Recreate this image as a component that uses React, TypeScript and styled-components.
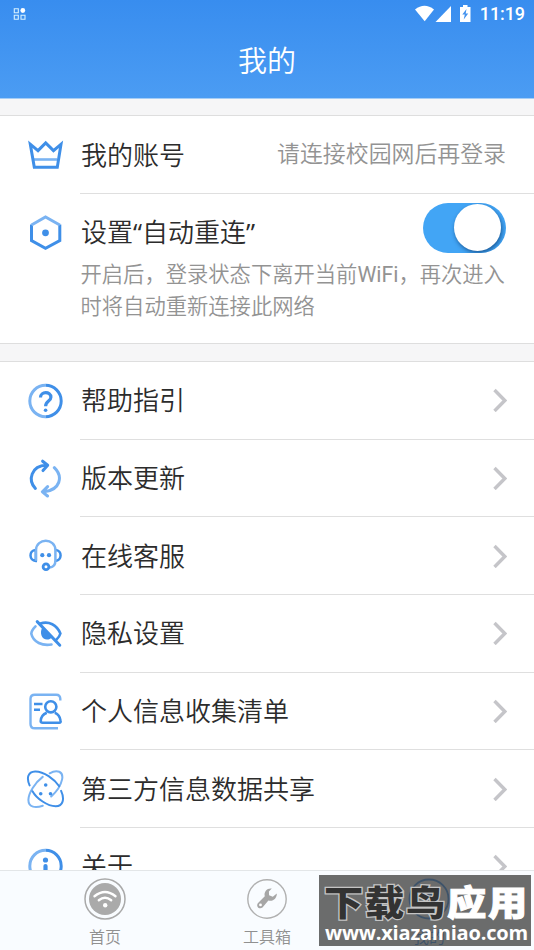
import React from "react";
import styled, { createGlobalStyle } from "styled-components";

const DEEP = "#3f8fe8";
const PALE = "#7ab3f2";

const GlobalStyle = createGlobalStyle`
  * { box-sizing: border-box; }
  html, body { margin: 0; padding: 0; overflow: hidden; }
  body { font-family: Roboto, "Noto Sans CJK SC", sans-serif; font-weight: 400; }
`;

const Screen = styled.div`
  width: 534px;
  height: 950px;
  display: flex;
  flex-direction: column;
  background: #f6f6f7;
  overflow: hidden;
  position: relative;
`;

const Header = styled.header`
  flex: none;
  height: 99px;
  background: linear-gradient(#388def, #4b9cf3);
  border-bottom: 1px solid #a5cdf6;
  color: #fff;
`;

const StatusBar = styled.div`
  height: 27px;
  display: flex;
  align-items: center;
  justify-content: space-between;
  padding: 0 9px 0 13px;
`;

const StatusIcons = styled.div`
  display: flex;
  align-items: center;
`;

const Clock = styled.span`
  width: 46px;
  font: 500 18px/27px Roboto, sans-serif;
  letter-spacing: -0.1px;
  margin-left: 6px;
  text-align: right;
`;

const Title = styled.h1`
  margin: 0;
  height: 66px;
  padding-top: 3px;
  font-size: 29px;
  line-height: 65px;
  font-weight: 350;
  text-align: center;
`;

const Content = styled.main`
  flex: 1;
  min-height: 0;
  overflow: hidden;
`;

const Group = styled.section<{ $last?: boolean }>`
  margin-top: ${(p) => (p.$last ? 17 : 16)}px;
  background: #fff;
  border-top: 1px solid #dedede;
  border-bottom: 1px solid #dedede;
`;

const Row = styled.div<{ $h: number }>`
  height: ${(p) => p.$h}px;
  display: flex;
  padding-left: 25px;
`;

const IconCell = styled.div`
  width: 41px;
  height: 77px;
  display: flex;
  align-items: center;
  flex: none;
`;

const RowBody = styled.div<{ $line?: boolean }>`
  flex: 1;
  margin-left: 14px;
  padding-right: 27px;
  display: flex;
  align-items: center;
  justify-content: space-between;
  border-bottom: ${(p) => (p.$line ? "1px solid #dfdfdf" : "none")};
`;

const Label = styled.span`
  font-family: "Open Sans", "Noto Sans CJK SC", sans-serif;
  font-size: 26px;
  line-height: 38px;
  font-weight: 350;
  color: #2c2c2c;
  padding-left: 1px;
`;

const Note = styled.span`
  font-size: 22.9px;
  line-height: 32px;
  font-weight: 350;
  color: #939393;
  margin: 1px 1px 0 0;
`;

const SettingBody = styled.div`
  flex: 1;
  margin-left: 14px;
  padding-right: 28px;
`;

const SettingHead = styled.div`
  display: flex;
  align-items: flex-start;
  justify-content: space-between;
  height: 64px;
  padding-top: 9px;
`;

const SettingLabel = styled(Label)`
  margin-top: 10px;
`;

const Latin = styled.span`
  font-weight: 400;
`;

const Description = styled.p`
  margin: 1px -10px 0 0.5px;
  font-size: 21.3px;
  line-height: 32px;
  font-weight: 350;
  color: #939393;
  white-space: nowrap;
`;

const Switch = styled.button`
  width: 83px;
  height: 50px;
  border: 0;
  border-radius: 26px;
  background: #42a5f5;
  padding: 1px 5px 1px 0;
  display: flex;
  justify-content: flex-end;
  overflow: hidden;
`;

const Knob = styled.span`
  width: 47px;
  height: 47px;
  border-radius: 50%;
  background: #fff;
  box-shadow: 1px 2px 4px rgba(0, 40, 90, 0.6);
`;

const TabBar = styled.nav`
  flex: none;
  height: 80px;
  display: grid;
  grid-template-columns: repeat(3, 162px);
  padding-left: 24px;
  background: #f9fcff;
  border-top: 1px solid #e3e6e8;
`;

const Tab = styled.div<{ $active?: boolean }>`
  display: flex;
  flex-direction: column;
  align-items: center;
  padding-top: 7px;
  font-size: 16px;
  line-height: 24px;
  font-weight: 350;
  color: ${(p) => (p.$active ? "#2f8cf0" : "#909090")};
  svg { margin-bottom: 6px; }
`;

const Watermark = styled.div`
  position: absolute;
  left: 319px;
  top: 875px;
  width: 212px;
  height: 71px;
  background: rgba(66, 66, 66, 0.78);
  color: #fff;
  overflow: hidden;
`;

const BrandLine = styled.div`
  display: flex;
  height: 48px;
  padding-left: 4px;
  font-size: 35px;
  line-height: 60px;
  font-weight: 900;
`;

const BrandChar = styled.span<{ $dark?: boolean }>`
  width: 41px;
  text-align: center;
  transform: scaleX(1.12);
  color: ${(p) => (p.$dark ? "#333" : "#fff")};
  -webkit-text-stroke: ${(p) => (p.$dark ? "2.5px #c4c4c4" : "1px #fff")};
  paint-order: stroke fill;
`;

const BrandUrl = styled.div`
  font: 700 20px/20px "Open Sans", sans-serif;
  letter-spacing: -0.2px;
  padding-left: 6px;
  white-space: nowrap;
`;

/* Row icons share a 40-unit canvas with its centre at 20,20. */
const RowIcon = ({ children }: { children: React.ReactNode }) => (
  <svg width="40" height="40" viewBox="0 0 40 40" fill="none" stroke={DEEP} strokeWidth="2.6">
    {children}
  </svg>
);

const Crown = () => (
  <RowIcon>
    <path d="M9 24.5H32" stroke={PALE} />
    <path d="M5.3 9.2 L9.3 32.2 H32.3 L36 9.2 L28.5 15.6 L20.7 7.9 L13 15.6 Z" strokeWidth="3" />
  </RowIcon>
);

const Hexagon = () => (
  <RowIcon>
    <path d="M6.5 11.5V27.5L20.5 35.3L34.8 27.5V11.5" strokeWidth="3" />
    <path d="M6.5 12L20.5 4L34.8 12" stroke={PALE} strokeWidth="3" />
    <circle cx="20.5" cy="19.8" r="3.4" fill={DEEP} stroke="none" />
  </RowIcon>
);

const Ring = ({ children }: { children: React.ReactNode }) => (
  <RowIcon>
    <path d="M20.5 4.3A15.7 15.7 0 0 0 20.5 35.7" stroke={PALE} strokeWidth="3" />
    <path d="M20.5 4.3A15.7 15.7 0 0 1 20.5 35.7" strokeWidth="3" />
    {children}
  </RowIcon>
);

const Help = () => (
  <Ring>
    <path d="M15.5 16.5C15.5 10 25.9 10.2 25.9 16.2C25.9 20.3 20.6 19.8 20.6 25.3" strokeWidth="3.2" />
    <circle cx="20.6" cy="29.2" r="1.8" fill={DEEP} stroke="none" />
  </Ring>
);

const Info = () => (
  <Ring>
    <circle cx="20.5" cy="14" r="2.6" fill={DEEP} stroke="none" />
    <path d="M20.5 20V30" strokeWidth="4.2" strokeLinecap="round" />
  </Ring>
);

const Refresh = () => (
  <RowIcon>
    <g strokeLinecap="round" strokeLinejoin="round" strokeWidth="3">
      <path d="M10.4 30.5C2.6 22 6 8 21.5 7.1M17.6 3.2L22.7 7.2L18 12.6" />
      <path d="M29.3 9.7C38.4 18.5 35.4 32 19 33.8M22.6 28.6L17.4 33.8L22.5 38" stroke={PALE} />
    </g>
  </RowIcon>
);

const Support = () => (
  <RowIcon>
    <path d="M10.5 14.1C3.7 14.4 3.9 24.7 10.8 24.9V13.8M30.6 14.1C37.4 14.4 37.2 24.7 30.3 24.9" strokeWidth="2.5" />
    <path d="M11 24.8V14C11.4 1.8 30.2 1.8 30.4 14V24.5C30.4 29 28.5 31 25 31.5" stroke={PALE} strokeWidth="2.5" />
    <circle cx="17.3" cy="19.2" r="2.1" fill={DEEP} stroke="none" />
    <circle cx="24" cy="19.2" r="2.1" fill={DEEP} stroke="none" />
    <circle cx="21" cy="30.8" r="2.9" strokeWidth="2.8" />
  </RowIcon>
);

const Privacy = () => (
  <RowIcon>
    <g transform="translate(0 .7)">
      <path d="M10.5 12.7C8.2 15 6.4 18 6.3 20C8.3 28.6 17.5 32.5 26.5 30.8" stroke={PALE} strokeLinecap="round" />
      <path d="M15.4 9.8C24 7.1 31.8 11.2 35.4 19.8C34.7 22.4 33 24.6 31.3 26" strokeLinecap="round" />
      <path d="M17 14.5L26.7 23.5C25 26.6 18 27.1 16.5 21.8C15.6 19 16 16 17 14.5Z" fill={DEEP} stroke="none" />
      <path d="M12.2 7.9L34.8 31.5" strokeLinecap="round" strokeWidth="3" />
    </g>
  </RowIcon>
);

const Profile = () => (
  <RowIcon>
    <path d="M35.3 9.5V7.8Q35.3 3.7 31.3 3.7H9.8Q5.5 3.7 5.5 7.8V33Q5.5 37.3 9.8 37.3H33" stroke={PALE} strokeWidth="2.4" />
    <path d="M9 13H17.5M9 18.8H15" strokeWidth="2.5" />
    <circle cx="25.8" cy="15.8" r="5.6" strokeWidth="2.6" />
    <path d="M21.8 21.8C18.3 23.2 15.8 26.7 15.7 30.2Q15.8 31.7 17.6 31.7H34.3Q35.9 31.7 35.6 29.9C35.1 26.2 32.8 23 29.8 21.8" strokeWidth="2.6" />
  </RowIcon>
);

const Orbit = () => (
  <RowIcon>
    <g strokeWidth="2" strokeLinecap="round" transform="translate(0 -.8)">
      <path d="M24.7 5.1C32 .8 38.7 3.2 37.1 11.2C35.9 17 31.5 23.5 26.2 28.3M17.8 37.5C11 39.8 3.2 39.6 3.4 31.5C3.6 24.7 9.9 14.6 17.7 8.7" stroke={PALE} />
      <path d="M4.6 17.2C1.4 10.1 2.7 3.4 10.1 3.2C18.8 3 29.4 11 34.2 18M36.1 22.7C39.8 30.7 38.1 38.1 30.7 38.1C22.5 37.9 11.7 30.6 7.5 23" />
    </g>
    <g fill={DEEP} stroke="none">
      <circle cx="20.7" cy="16" r="1.8" />
      <circle cx="15.7" cy="24.8" r="1.8" />
      <circle cx="25.5" cy="24.8" r="1.8" />
    </g>
  </RowIcon>
);

const Chevron = () => (
  <svg width="14" height="24" viewBox="0 0 14 24" fill="none" stroke="#c5c5c9" strokeWidth="3.4">
    <path d="M1.5 2L11.8 12.5L1.5 23" />
  </svg>
);

const entries: [string, () => React.JSX.Element][] = [
  ["帮助指引", Help],
  ["版本更新", Refresh],
  ["在线客服", Support],
  ["隐私设置", Privacy],
  ["个人信息收集清单", Profile],
  ["第三方信息数据共享", Orbit],
  ["关于", Info],
];

export default function App() {
  return (
    <Screen lang="zh-CN">
      <GlobalStyle />
      <Header>
        <StatusBar>
          <svg width="14" height="14" viewBox="0 0 14 14" fill="none" stroke="#d6f1ff" strokeWidth="1.1">
            <path d="M1.3 1.8H5.3V5.8H1.3ZM1.3 8.2H5.3V12.2H1.3ZM8 8.2H12V12.2H8Z" />
            <circle cx="9.8" cy="3.5" r="2.4" fill="#fff" stroke="none" />
          </svg>
          <StatusIcons>
            <svg width="58" height="18" viewBox="0 0 58 18" fill="#fff">
              <path d="M0 4.5Q9.5-3 19 4.5L9.7 16.3Z" />
              <path d="M36 1V17H20.5Z" />
              <path d="M45 2H48V0H52.5V2H55.5V17H45Z" />
              <path d="M51.5 4L47.3 9.6H49.8L48.7 14.5L53.2 8.4H50.7Z" fill="#4292ef" />
            </svg>
            <Clock>11:19</Clock>
          </StatusIcons>
        </StatusBar>
        <Title>我的</Title>
      </Header>

      <Content>
        <Group>
          <Row $h={78}>
            <IconCell><Crown /></IconCell>
            <RowBody $line>
              <Label>我的账号</Label>
              <Note>请连接校园网后再登录</Note>
            </RowBody>
          </Row>
          <Row $h={149}>
            <IconCell><Hexagon /></IconCell>
            <SettingBody>
              <SettingHead>
                <SettingLabel>
                  设置<Latin>“</Latin>自动重连<Latin>”</Latin>
                </SettingLabel>
                <Switch aria-label="自动重连"><Knob /></Switch>
              </SettingHead>
              <Description>
                开启后，登录状态下离开当前<Latin>WiFi</Latin>，再次进入
                <br />
                时将自动重新连接此网络
              </Description>
            </SettingBody>
          </Row>
        </Group>

        <Group $last>
          {entries.map(([name, Icon]) => (
            <Row key={name} $h={77.67}>
              <IconCell><Icon /></IconCell>
              <RowBody $line>
                <Label>{name}</Label>
                <Chevron />
              </RowBody>
            </Row>
          ))}
        </Group>
      </Content>

      <TabBar>
        <Tab>
          <svg width="42" height="42" viewBox="0 0 42 42" fill="none" stroke="#a9a9a9">
            <circle cx="21" cy="21" r="20" strokeWidth="1.5" />
            <circle cx="21" cy="21" r="16" fill="#aaa" stroke="none" />
            <g stroke="#fff" strokeWidth="2.4" strokeLinecap="round">
              <path d="M10.5 18.2Q21 9.8 31.5 18.2M14.8 22.3Q21 17.4 27.2 22.3" />
            </g>
            <circle cx="21.2" cy="27.3" r="2.2" fill="#fff" stroke="none" />
          </svg>
          首页
        </Tab>
        <Tab>
          <svg width="42" height="42" viewBox="0 0 42 42" fill="none" stroke="#b0b0b0">
            <circle cx="21" cy="21" r="19.2" strokeWidth="1.4" />
            <path
              d="M25.8 10.5C21.4 9.8 17.5 13.5 18.8 18.2L11.8 25.2C9.7 28.7 13.3 31.8 16.5 29.6L22.4 22.6C27.2 23.9 31 20 30.8 15.5L26.8 18.8L23.1 17.2L22.9 13.5Z"
              fill="#a6a6a6"
              stroke="none"
            />
            <circle cx="14.5" cy="26.9" r="1.4" fill="#fff" stroke="none" />
          </svg>
          工具箱
        </Tab>
        <Tab $active>
          <svg width="42" height="42" viewBox="0 0 42 42" fill="none" stroke="#2f8cf0" strokeWidth="1.8">
            <circle cx="21" cy="21" r="19.5" />
            <circle cx="21" cy="16" r="6" fill="#2f8cf0" />
            <path d="M9 31Q11 23 21 23T33 31Q21 40 9 31Z" fill="#2f8cf0" />
          </svg>
          我的
        </Tab>
      </TabBar>

      <Watermark>
        <BrandLine>
          {[..."下载鸟应用"].map((ch, i) => (
            <BrandChar key={ch} $dark={i < 3}>{ch}</BrandChar>
          ))}
        </BrandLine>
        <BrandUrl>www.xiazainiao.com</BrandUrl>
      </Watermark>
    </Screen>
  );
}
